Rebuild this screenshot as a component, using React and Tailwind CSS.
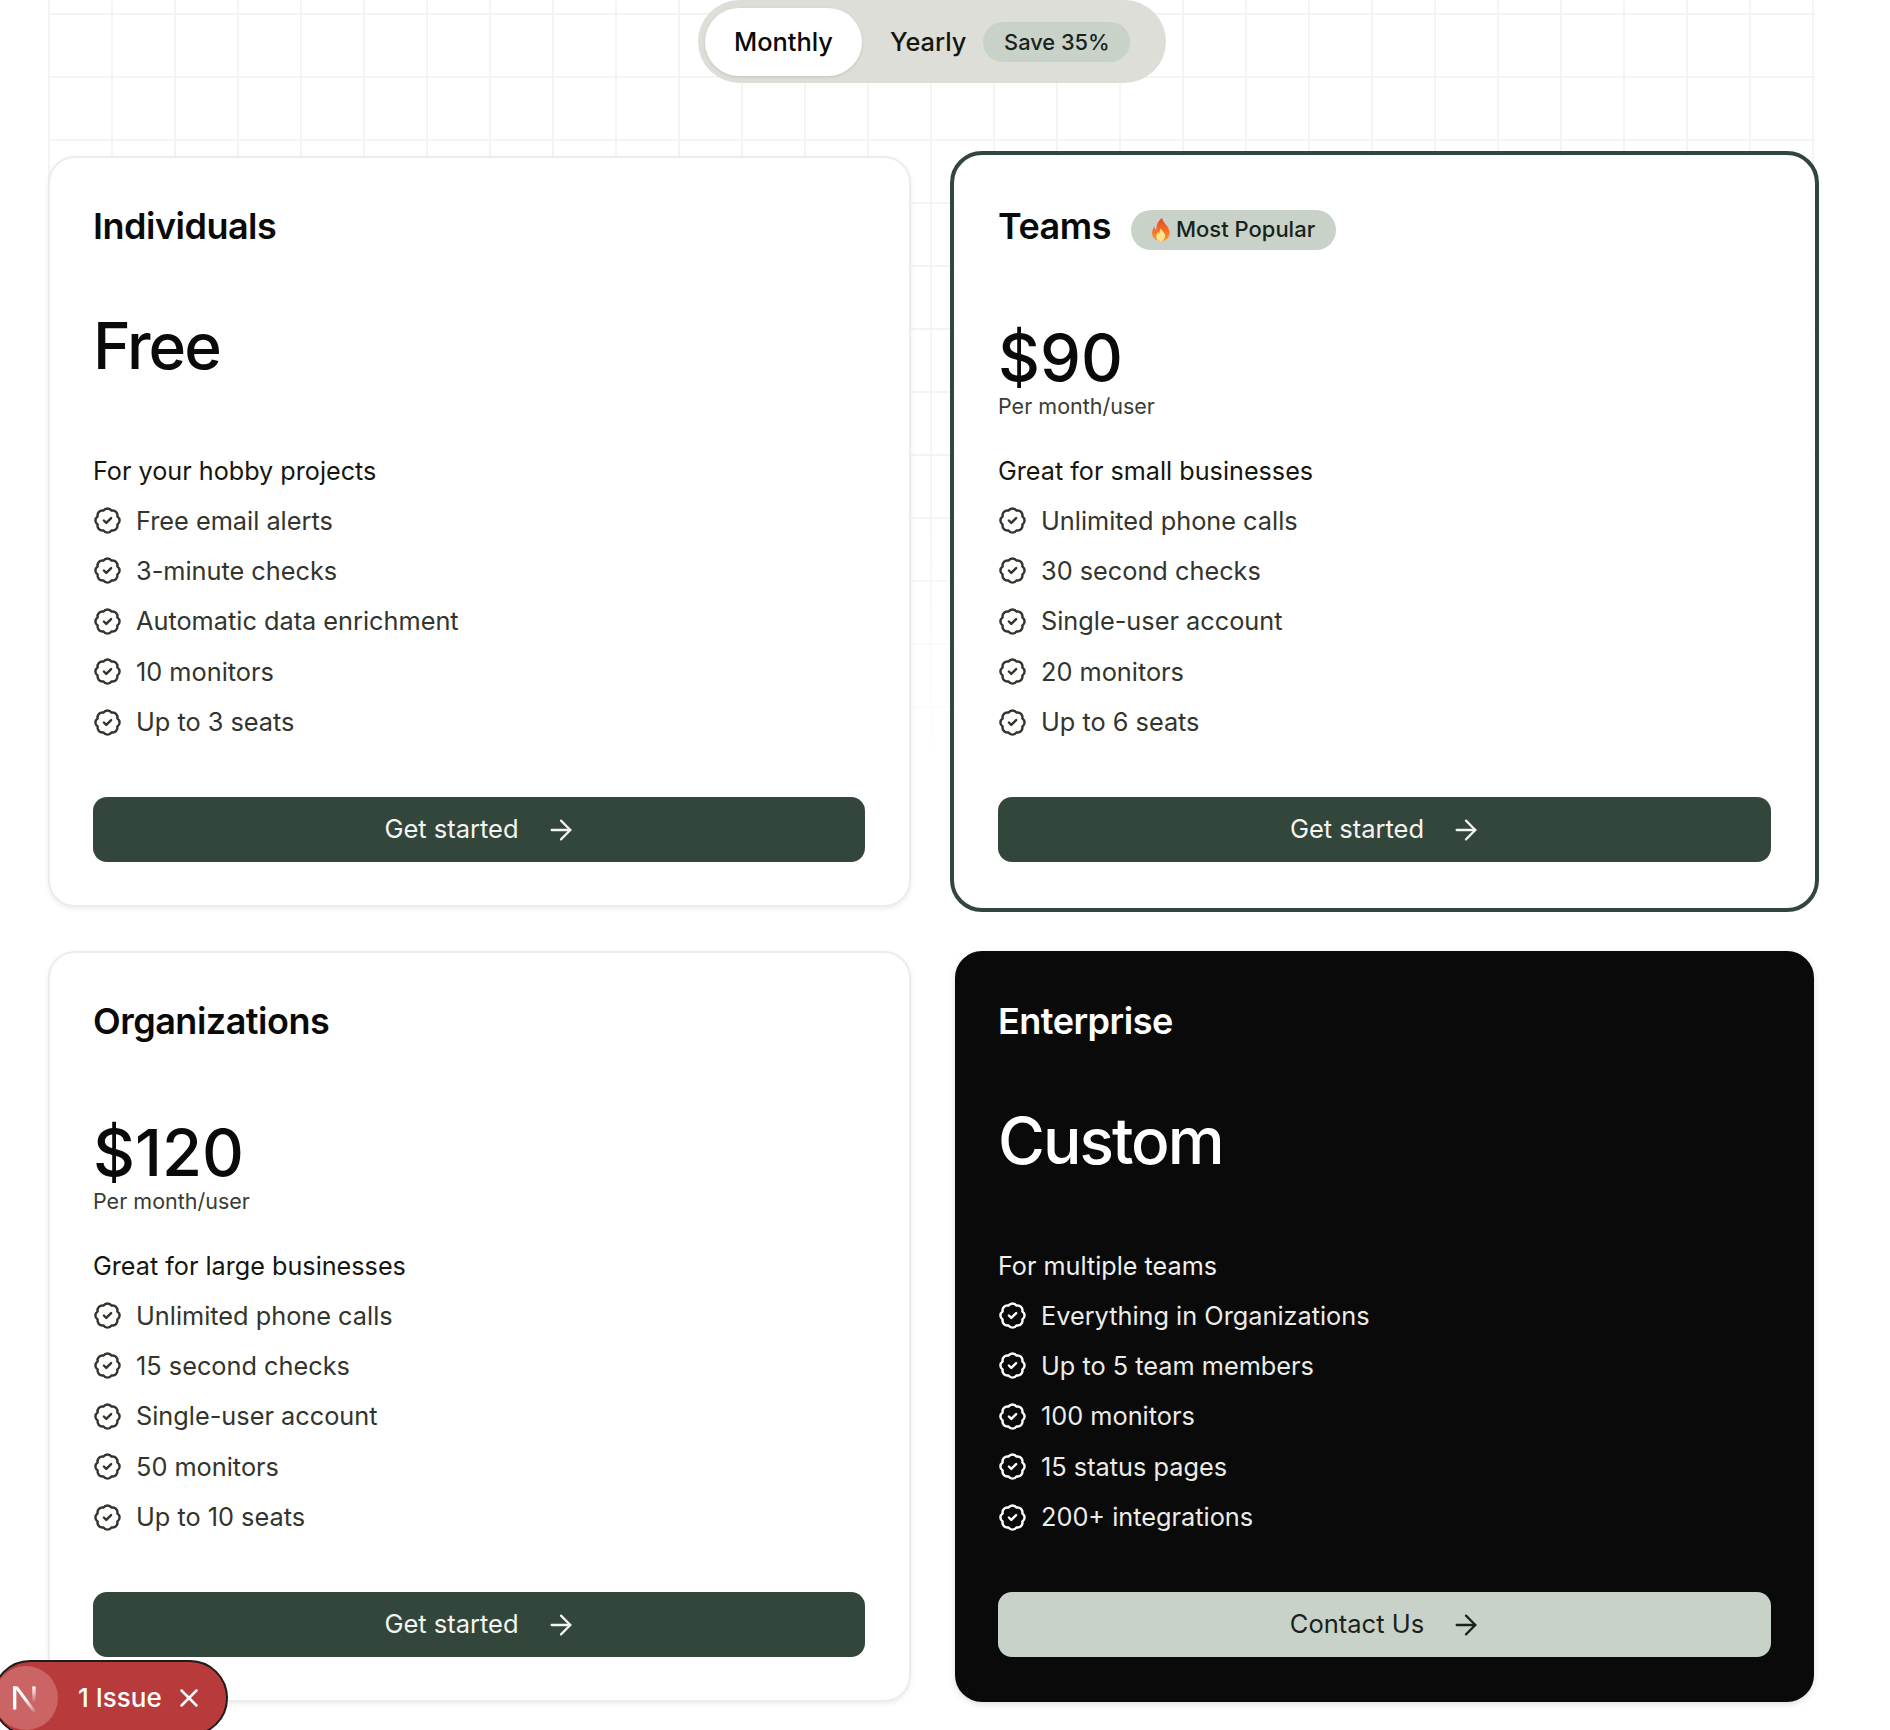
import React from "react";
import { ArrowRight, BadgeCheck, X } from "lucide-react";

const plans = [
  { name: "Individuals", price: "Free", desc: "For your hobby projects", features: ["Free email alerts", "3-minute checks", "Automatic data enrichment", "10 monitors", "Up to 3 seats"], cta: "Get started" },
  { name: "Teams", price: "$90", per: true, popular: true, desc: "Great for small businesses", features: ["Unlimited phone calls", "30 second checks", "Single-user account", "20 monitors", "Up to 6 seats"], cta: "Get started" },
  { name: "Organizations", price: "$120", per: true, desc: "Great for large businesses", features: ["Unlimited phone calls", "15 second checks", "Single-user account", "50 monitors", "Up to 10 seats"], cta: "Get started" },
  { name: "Enterprise", price: "Custom", dark: true, desc: "For multiple teams", features: ["Everything in Organizations", "Up to 5 team members", "100 monitors", "15 status pages", "200+ integrations"], cta: "Contact Us" },
];

function Flame() {
  return (
    <svg width="22" height="25" viewBox="0 0 20 22" className="shrink-0">
      <defs>
        <linearGradient id="fl" x1="0" y1="0" x2="0" y2="1">
          <stop offset="0" stopColor="#e8452c" />
          <stop offset="0.6" stopColor="#f4762a" />
          <stop offset="1" stopColor="#f89a2e" />
        </linearGradient>
      </defs>
      <path d="M11 0.5c0.6 3.4 3 5 4.8 7.8 1.6 2.5 2.4 4.6 2 7-0.6 3.8-4 6.2-7.8 6.2s-7.400-2.300-8-6.200c-0.400-2.600 0.600-5 2-6.800 0.200 1.300 0.700 2.300 1.700 3 0-4.200 1.500-8.500 5.300-11z" fill="url(#fl)" />
      <path d="M10 10c0.400 2 2.800 3.200 3.500 5.500 0.700 2.700-1.200 6-3.900 6-2.600 0-4.400-2.600-3.800-5.200 0.300-1.300 1-2.200 1.700-3 0.200 0.800 0.500 1.300 1 1.700 0-1.800 0.500-3.700 1.500-5z" fill="#fde68a" />
    </svg>
  );
}

function Card({ plan }) {
  const { dark, popular } = plan;
  return (
    <div
      className={
        "flex h-[751px] flex-col rounded-[27px] border-2 " +
        (dark
          ? "border-[#0a0a0a] bg-[#0a0a0a] px-[41px] shadow-[0_2px_6px_rgba(0,0,0,0.14)]"
          : popular
            ? "border-white bg-white px-[41px] outline-4 outline-offset-1 outline-[#33463c]"
            : "border-[#ececec] bg-white pl-[43px] pr-[44px] shadow-[0_2px_5px_rgba(0,0,0,0.08)]")
      }
    >
      <div className={"mt-[35px] flex h-[66px] items-center gap-[20px] " + (dark ? "text-white" : "text-[#0a0a0a]")}>
        <h3 className="text-[36px] font-semibold leading-none tracking-[-0.5px]">{plan.name}</h3>
        {popular && (
          <span className="mt-[7px] flex h-[40px] items-center gap-[4px] rounded-full bg-[#c8d2c8] pl-[19px] pr-[21px] text-[22px] font-medium text-[#18231b]">
            <Flame />
            Most Popular
          </span>
        )}
      </div>
      <div className={"mt-[41px] flex h-[153px] flex-col " + (dark ? "text-white" : "text-[#0a0a0a]")}>
        {plan.per ? (
          <>
            <div className="mt-[23px] text-[65px] font-medium leading-[70px]">{plan.price}</div>
            <div className="text-[21.500px] leading-[26px] text-[#3a3b33]">Per month/user</div>
          </>
        ) : (
          <div className="mt-[10px] text-[64px] font-medium leading-[72px] tracking-[-2px]">{plan.price}</div>
        )}
      </div>
      <p className={"text-[25.200px] leading-[36px] " + (dark ? "text-[#f0f0ec]" : "text-[#16160f]")}>{plan.desc}</p>
      <ul className="mt-[13.500px] flex flex-col gap-[14.400px]">
        {plan.features.map((f) => (
          <li key={f} className={"flex h-[36px] items-center gap-[14px] text-[25.300px] " + (dark ? "text-[#ececE6]" : "text-[#33342c]")}>
            <BadgeCheck size={29} strokeWidth={2} className={dark ? "text-white" : "text-[#33342c]"} />
            {f}
          </li>
        ))}
      </ul>
      <button
        className={
          "mt-[57px] flex h-[65px] w-full items-center justify-center gap-[26px] rounded-[14px] pl-[3px] text-[25.500px] " +
          (dark ? "bg-[#c8d2c8] text-[#18231b]" : "bg-[#33463c] text-[#f4f5f0]")
        }
      >
        {plan.cta}
        <ArrowRight size={32} strokeWidth={1.7} />
      </button>
    </div>
  );
}

export default function App() {
  return (
    <div className="relative h-[1730px] w-[1890px] overflow-hidden bg-white font-['Inter',sans-serif]">
      <div className="absolute left-[48px] top-0 h-[770px] w-[1767px] bg-[linear-gradient(to_right,#f4f4f4_2px,transparent_2px),linear-gradient(to_bottom,#f4f4f4_2px,transparent_2px)] bg-[size:63px_63px] bg-[position:0_13px] [mask-image:linear-gradient(to_bottom,black_65%,transparent_100%)]" />
      <div className="relative flex justify-center">
        <div className="ml-[-26px] flex h-[83px] w-[468px] items-center rounded-full bg-[#dddeD8] px-[7px]">
          <div className="flex h-[68px] w-[157px] items-center justify-center rounded-full bg-white pt-[2px] text-[25.400px] font-medium text-[#0a0a0a] shadow-[0_1px_3px_rgba(0,0,0,0.12)]">Monthly</div>
          <div className="ml-[28px] pt-[2px] text-[25.400px] font-medium text-[#16160f]">Yearly</div>
          <div className="ml-[17px] flex h-[40px] w-[147px] items-center justify-center rounded-full bg-[#c8d2c8] pt-[2px] text-[21.800px] font-medium text-[#18231b]">Save 35%</div>
        </div>
      </div>
      <div className="relative mt-[73px] grid grid-cols-[863px_859px] gap-x-[44px] gap-y-[44px] pl-[48px]">
        {plans.map((p) => (
          <Card key={p.name} plan={p} />
        ))}
      </div>
      <div className="fixed bottom-[-6px] left-[-8px] flex h-[76px] w-[236px] items-center rounded-full border-2 border-[#1c1c1c] bg-[#b93a3a] text-white">
        <div className="flex h-[64px] w-[64px] items-center justify-center rounded-full bg-[#cb6464]">
          <svg width="27" height="30" viewBox="0 0 28 30" className="ml-[-2px]">
            <defs>
              <linearGradient id="nd" x1="0" y1="0" x2="1" y2="1">
                <stop offset="0.5" stopColor="#fff" />
                <stop offset="1" stopColor="#fff" stopOpacity="0" />
              </linearGradient>
              <linearGradient id="nv" x1="0" y1="0" x2="0" y2="1">
                <stop offset="0" stopColor="#fff" />
                <stop offset="0.7" stopColor="#fff" stopOpacity="0" />
              </linearGradient>
            </defs>
            <rect x="1" y="3" width="3.500" height="24" fill="#fff" />
            <path d="M2 3h4L26 30h-4z" fill="url(#nd)" />
            <rect x="21" y="3" width="3.500" height="24" fill="url(#nv)" />
          </svg>
        </div>
        <span className="ml-[20px] text-[26px] font-medium leading-none">1 Issue</span>
        <X size={30} strokeWidth={2} className="ml-[12px]" />
      </div>
    </div>
  );
}
